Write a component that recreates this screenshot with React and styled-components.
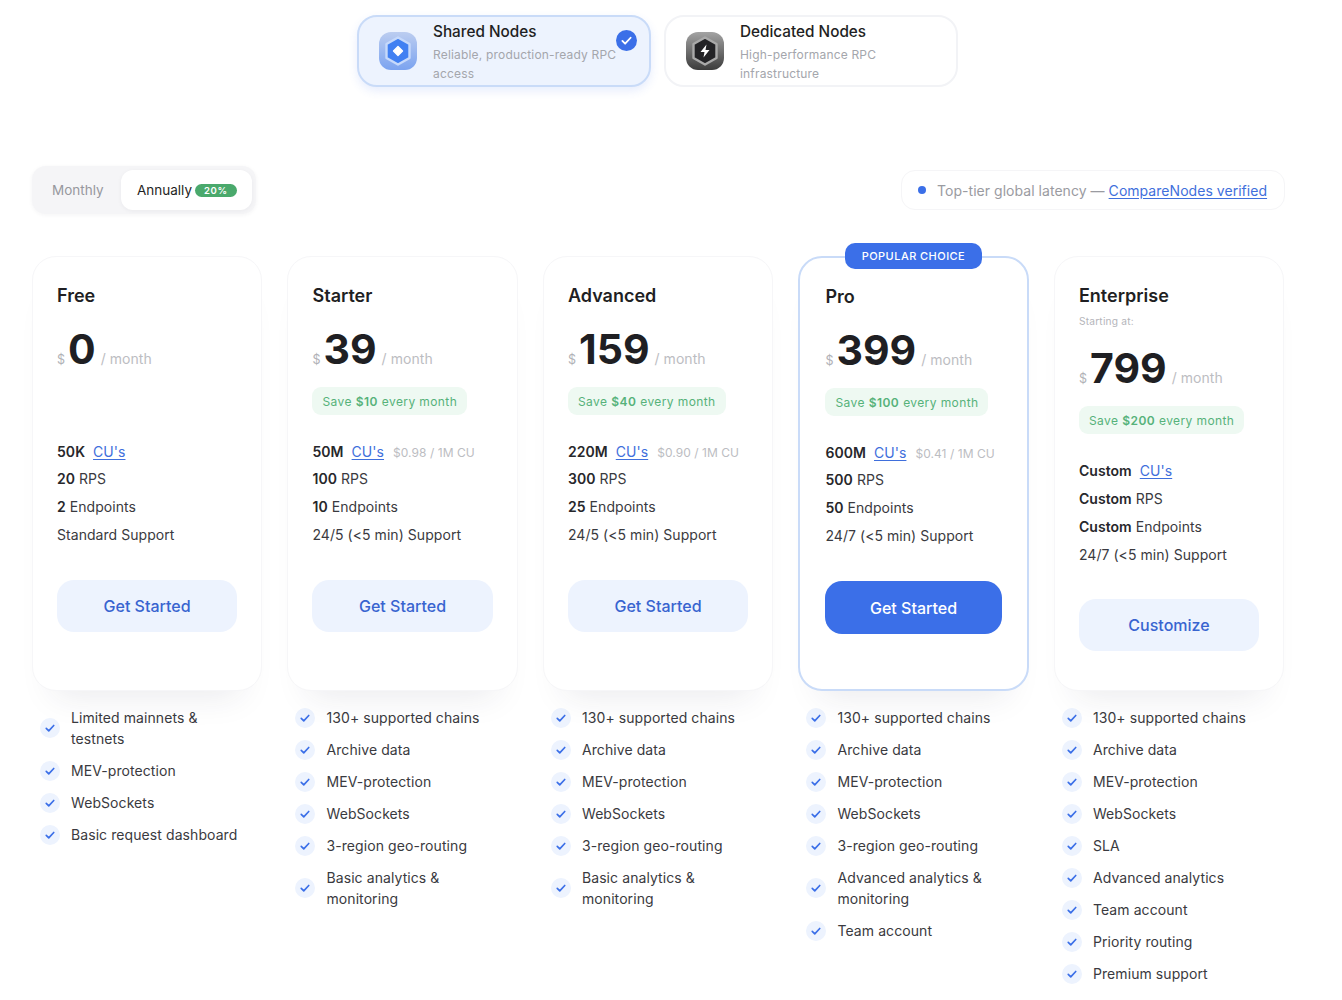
import React from 'react';
import styled, { createGlobalStyle } from 'styled-components';

const Global = createGlobalStyle`
  * { box-sizing: border-box; }
  html, body { margin: 0; padding: 0; background: #fff; }
  body {
    font-family: Inter, "Liberation Sans", sans-serif;
    color: #1f1f23;
    -webkit-font-smoothing: antialiased;
  }
`;

const Page = styled.div`
  width: 1342px;
  height: 1000px;
  overflow: hidden;
  padding: 15px 57px 0 32px;
`;

const NodeTabs = styled.div`
  display: flex;
  justify-content: center;
  gap: 13px;
  padding-right: 2px;
`;

const NodeTab = styled.div`
  position: relative;
  width: 294px;
  height: 72px;
  display: flex;
  align-items: center;
  gap: 16px;
  padding: 0 19px 0 20px;
  border-radius: 20px;
  border: 2px solid ${p => (p.$active ? '#c9dbf8' : '#f2f3f6')};
  background: ${p => (p.$active ? '#edf3fe' : '#fff')};
  box-shadow: ${p => (p.$active ? '0 4px 10px rgba(60, 110, 235, 0.12)' : 'none')};
`;

const NodeIcon = styled.svg`
  flex: none;
  width: 38px;
  height: 38px;
`;

const NodeText = styled.div`
  align-self: flex-start;
  padding-top: 5px;
`;

const NodeTitle = styled.div`
  font-size: 15.3px;
  font-weight: 500;
  line-height: 20px;
  color: #1f1f23;
`;

const NodeDesc = styled.div`
  margin-top: 4px;
  font-size: 12px;
  line-height: 18.5px;
  letter-spacing: 0.18px;
  color: #a4a6ac;
  width: 188px;
`;

const SelectedMark = styled.div`
  position: absolute;
  top: 13px;
  right: 12px;
  width: 21px;
  height: 21px;
  border-radius: 50%;
  background: #3b6fe8;
  display: flex;
  align-items: center;
  justify-content: center;
`;

const Controls = styled.div`
  margin-top: 79px;
  height: 48px;
  display: flex;
  align-items: center;
  justify-content: space-between;
`;

const Toggle = styled.div`
  width: 224px;
  height: 48px;
  padding: 4px;
  display: flex;
  border-radius: 14px;
  background: #f5f5f7;
  box-shadow: 0 1px 4px rgba(30, 30, 50, 0.05);
`;

const Period = styled.div`
  display: flex;
  align-items: center;
  gap: 3px;
  font-size: 13.5px;
  padding-left: 16px;
  border-radius: 12px;
  background: ${p => (p.$active ? '#fff' : 'transparent')};
  color: ${p => (p.$active ? '#1f1f23' : '#97989e')};
  flex: ${p => (p.$active ? '1' : '0 0 85px')};
  box-shadow: ${p => (p.$active ? '0 1px 4px rgba(30, 30, 50, 0.05)' : 'none')};
`;

const Discount = styled.span`
  background: #4aa96c;
  color: #fff;
  font-size: 9.5px;
  font-weight: 600;
  letter-spacing: 0.6px;
  line-height: 13px;
  padding: 0 9px;
  border-radius: 7px;
`;

const Latency = styled.div`
  width: 384px;
  height: 40px;
  display: flex;
  align-items: center;
  padding: 0 16px;
  border: 1px solid #f5f5f7;
  border-radius: 14px;
  font-size: 14px;
  letter-spacing: 0.04px;
  color: #9a9ba1;
  white-space: nowrap;
`;

const Dot = styled.span`
  flex: none;
  width: 8px;
  height: 8px;
  margin-right: 11px;
  border-radius: 50%;
  background: #3b6fe8;
`;

const Link = styled.a`
  color: #3f6fdc;
  text-decoration: underline;
  text-underline-offset: 2px;
`;

const Plans = styled.div`
  margin-top: 42px;
  display: grid;
  grid-template-columns: repeat(5, 230.1px);
  column-gap: 25.4px;
`;

const Plan = styled.div`
  min-width: 0;
`;

const Card = styled.div`
  position: relative;
  height: 435px;
  padding: ${p => (p.$popular ? '28px 25px 0' : '28px 24px 0')};
  border-radius: 24px;
  background: #fff;
  border: ${p => (p.$popular ? '2px solid #c9dbf8' : '1px solid #f6f6f8')};
  box-shadow: 0 26px 34px -22px rgba(40, 40, 70, 0.1);
`;

const PopularTag = styled.div`
  position: absolute;
  top: -15px;
  left: 44.5px;
  width: 137px;
  height: 26px;
  border-radius: 10px;
  background: #3b6fe8;
  color: #fff;
  font-size: 11px;
  font-weight: 500;
  letter-spacing: 0.45px;
  display: flex;
  align-items: center;
  justify-content: center;
`;

const PlanName = styled.div`
  font-size: 18px;
  font-weight: 600;
  line-height: 22px;
`;

const StartingAt = styled.div`
  margin-top: 7px;
  height: 15px;
  font-size: 10.2px;
  line-height: 15px;
  letter-spacing: 0.2px;
  color: #b4b5ba;
`;

const PriceRow = styled.div`
  margin-top: ${p => (p.$starting ? '15px' : '18px')};
  height: 48px;
  display: flex;
  align-items: baseline;
`;

const Currency = styled.span`
  font-size: 12.5px;
  color: #b0b1b6;
  margin-right: 3px;
`;

const Amount = styled.span`
  font-size: 41px;
  font-weight: 700;
  line-height: 48px;
  color: #1f1f23;
`;

const Per = styled.span`
  margin-left: 5px;
  font-size: 14px;
  letter-spacing: 0.05px;
  color: #bcbdc2;
`;

const SaveSlot = styled.div`
  margin-top: 14px;
  height: 28px;
`;

const Save = styled.div`
  display: inline-flex;
  align-items: center;
  gap: 4px;
  height: 28px;
  padding: 0 10px;
  border-radius: 9px;
  background: #eef9f2;
  color: #56b27a;
  font-size: 12px;
  letter-spacing: 0.4px;
  white-space: nowrap;
`;

const SaveAmount = styled.b`
  font-weight: 600;
`;

const Specs = styled.div`
  margin-top: 26px;
  display: flex;
  flex-direction: column;
  gap: 8px;
  font-size: 14px;
  line-height: 20px;
  letter-spacing: 0.05px;
  color: #3a3a40;
  & > :first-child {
    margin-top: 1px;
    margin-bottom: ${p => (p.$starting ? '0' : '-1px')};
  }
`;

const Spec = styled.div`
  height: 20px;
  white-space: nowrap;
`;

const Strong = styled.b`
  font-weight: 600;
  color: #27272b;
`;

const SpecLink = styled(Link)`
  margin-left: 8px;
`;

const UnitPrice = styled.span`
  margin-left: 9px;
  font-size: 12px;
  color: #bcbdc2;
`;

const Action = styled.div`
  margin-top: ${p => (p.$starting ? '34px' : '35px')};
  height: ${p => (p.$primary ? '53px' : '52px')};
  border-radius: 17px;
  background: ${p => (p.$primary ? '#3b6fe8' : '#edf3fe')};
  color: ${p => (p.$primary ? '#fff' : '#3864d0')};
  font-size: 16px;
  font-weight: 500;
  display: flex;
  align-items: center;
  justify-content: center;
`;

const Features = styled.ul`
  list-style: none;
  margin: 16px 0 0;
  padding: 0 8px;
  display: flex;
  flex-direction: column;
  gap: 10.6px;
`;

const Feature = styled.li`
  display: flex;
  align-items: center;
  gap: 11px;
  font-size: 14px;
  line-height: 21.4px;
  letter-spacing: 0.08px;
  color: #3a3a40;
`;

const Tick = styled.span`
  flex: none;
  width: 20px;
  height: 20px;
  border-radius: 50%;
  background: #edf3fe;
  display: flex;
  align-items: center;
  justify-content: center;
`;

const HEX = 'M19 5.5 30.5 12V26L19 32.5 7.5 26V12Z';

const SharedIcon = () => (
  <NodeIcon viewBox="0 0 38 38">
    <defs>
      <linearGradient id="shared" x1="0" y1="0" x2="0" y2="1">
        <stop offset="0" stopColor="#bccdf0" />
        <stop offset="1" stopColor="#7ba3f0" />
      </linearGradient>
    </defs>
    <rect width="38" height="38" rx="12" fill="url(#shared)" />
    <path d={HEX} fill="#4180f2" stroke="#c6d9fb" strokeWidth="2.4" strokeLinejoin="round" />
    <path d="M19 14.5 23.5 19 19 23.5 14.5 19Z" fill="#fff" stroke="#fff" strokeWidth="1.4" strokeLinejoin="round" />
  </NodeIcon>
);

const DedicatedIcon = () => (
  <NodeIcon viewBox="0 0 38 38">
    <defs>
      <linearGradient id="dedicated" x1="0" y1="0" x2="0" y2="1">
        <stop offset="0" stopColor="#a3a3a3" />
        <stop offset="1" stopColor="#3c3c3c" />
      </linearGradient>
    </defs>
    <rect width="38" height="38" rx="12" fill="url(#dedicated)" />
    <path d={HEX} fill="#232326" stroke="#a9a9a9" strokeWidth="2.4" strokeLinejoin="round" />
    <path d="M20.5 12.5 14.5 20H18.5L17.5 25.5 23.5 18H19.5Z" fill="#fff" />
  </NodeIcon>
);

const Check = ({ size = 10, color = '#3b6fe8', width = 2 }) => (
  <svg width={size} height={size} viewBox="0 0 12 12" fill="none">
    <path d="M1.5 6.5 4.5 9.5 10.5 3" stroke={color} strokeWidth={width} strokeLinecap="round" strokeLinejoin="round" />
  </svg>
);

const commonChains = ['130+ supported chains', 'Archive data', 'MEV-protection', 'WebSockets', '3-region geo-routing'];

const plans = [
  {
    name: 'Free', price: '0', cus: '50K', rps: '20', endpoints: '2', support: 'Standard Support', action: 'Get Started',
    features: ['Limited mainnets & testnets', 'MEV-protection', 'WebSockets', 'Basic request dashboard'],
  },
  {
    name: 'Starter', price: '39', save: '$10', cus: '50M', unit: '$0.98', rps: '100', endpoints: '10', support: '24/5 (<5 min) Support', action: 'Get Started',
    features: [...commonChains, 'Basic analytics & monitoring'],
  },
  {
    name: 'Advanced', price: '159', save: '$40', cus: '220M', unit: '$0.90', rps: '300', endpoints: '25', support: '24/5 (<5 min) Support', action: 'Get Started',
    features: [...commonChains, 'Basic analytics & monitoring'],
  },
  {
    name: 'Pro', price: '399', save: '$100', cus: '600M', unit: '$0.41', rps: '500', endpoints: '50', support: '24/7 (<5 min) Support', action: 'Get Started', popular: true,
    features: [...commonChains, 'Advanced analytics & monitoring', 'Team account'],
  },
  {
    name: 'Enterprise', price: '799', save: '$200', cus: 'Custom', rps: 'Custom', endpoints: 'Custom', support: '24/7 (<5 min) Support', action: 'Customize', starting: true,
    features: ['130+ supported chains', 'Archive data', 'MEV-protection', 'WebSockets', 'SLA', 'Advanced analytics', 'Team account', 'Priority routing', 'Premium support'],
  },
];

const PlanColumn = ({ plan }) => (
  <Plan>
    <Card $popular={plan.popular}>
      {plan.popular && <PopularTag>POPULAR CHOICE</PopularTag>}
      <PlanName>{plan.name}</PlanName>
      {plan.starting && <StartingAt>Starting at:</StartingAt>}
      <PriceRow $starting={plan.starting}>
        <Currency>$</Currency>
        <Amount>{plan.price}</Amount>
        <Per>/ month</Per>
      </PriceRow>
      <SaveSlot>
        {plan.save && (
          <Save>
            Save <SaveAmount>{plan.save}</SaveAmount> every month
          </Save>
        )}
      </SaveSlot>
      <Specs $starting={plan.starting}>
        <Spec>
          <Strong>{plan.cus}</Strong>
          <SpecLink>CU's</SpecLink>
          {plan.unit && <UnitPrice>{plan.unit} / 1M CU</UnitPrice>}
        </Spec>
        <Spec><Strong>{plan.rps}</Strong> RPS</Spec>
        <Spec><Strong>{plan.endpoints}</Strong> Endpoints</Spec>
        <Spec>{plan.support}</Spec>
      </Specs>
      <Action $primary={plan.popular} $starting={plan.starting}>{plan.action}</Action>
    </Card>
    <Features>
      {plan.features.map(item => (
        <Feature key={item}>
          <Tick><Check /></Tick>
          <span>{item}</span>
        </Feature>
      ))}
    </Features>
  </Plan>
);

export default function App() {
  return (
    <Page>
      <Global />
      <NodeTabs>
        <NodeTab $active>
          <SharedIcon />
          <NodeText>
            <NodeTitle>Shared Nodes</NodeTitle>
            <NodeDesc>Reliable, production-ready RPC access</NodeDesc>
          </NodeText>
          <SelectedMark><Check size={11} color="#fff" /></SelectedMark>
        </NodeTab>
        <NodeTab>
          <DedicatedIcon />
          <NodeText>
            <NodeTitle>Dedicated Nodes</NodeTitle>
            <NodeDesc>High-performance RPC infrastructure</NodeDesc>
          </NodeText>
        </NodeTab>
      </NodeTabs>
      <Controls>
        <Toggle>
          <Period>Monthly</Period>
          <Period $active>Annually <Discount>20%</Discount></Period>
        </Toggle>
        <Latency>
          <Dot />
          Top-tier global latency —&nbsp;<Link>CompareNodes verified</Link>
        </Latency>
      </Controls>
      <Plans>
        {plans.map(plan => <PlanColumn key={plan.name} plan={plan} />)}
      </Plans>
    </Page>
  );
}
